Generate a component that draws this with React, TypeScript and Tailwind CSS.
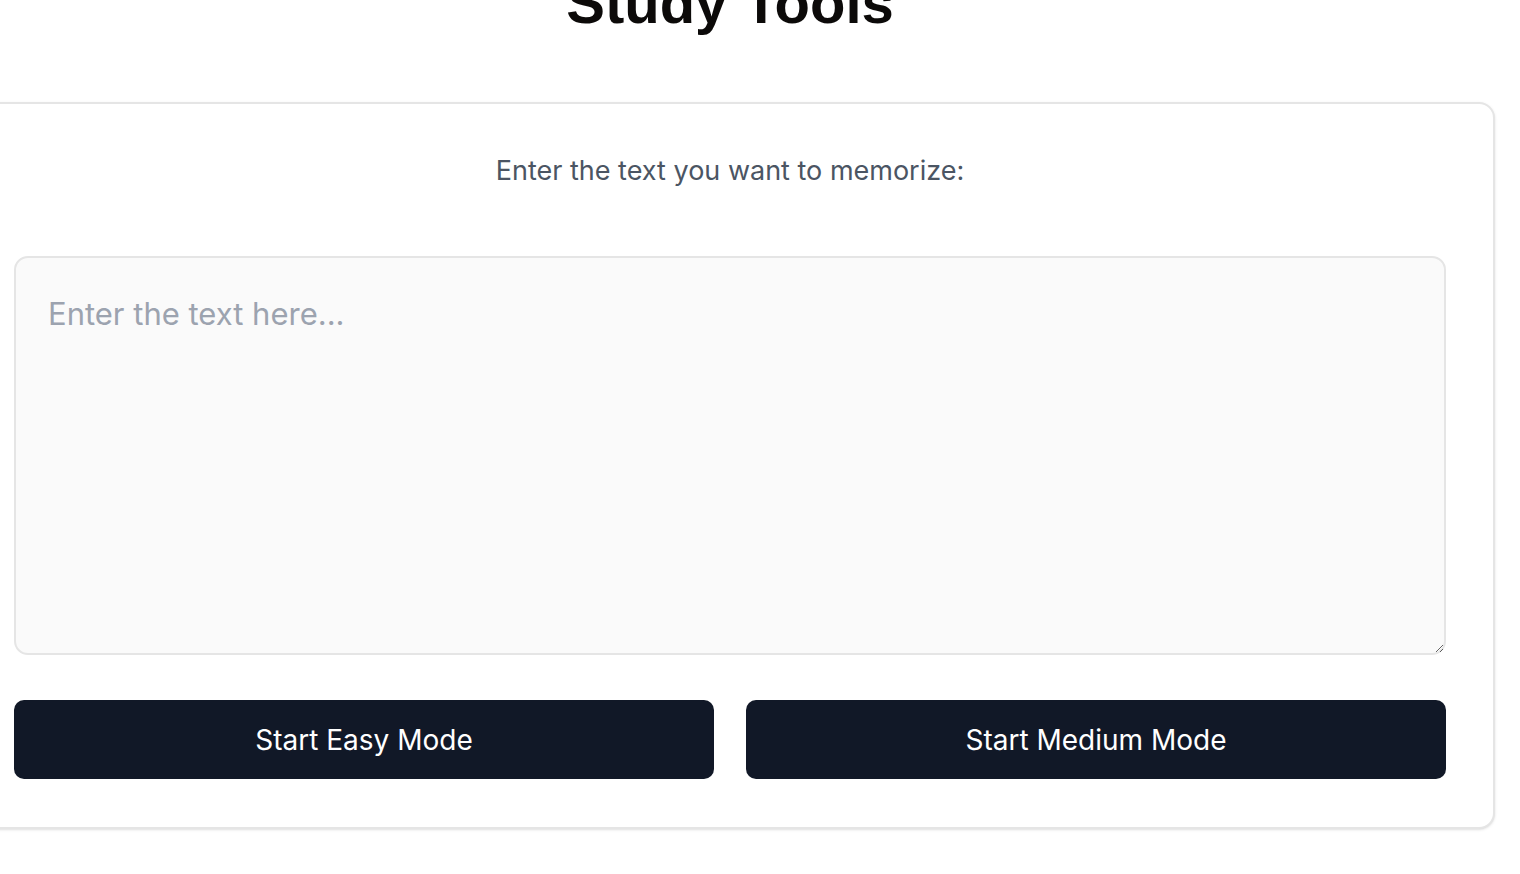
export default function App() {
  return (
    <div className="min-h-screen bg-white overflow-hidden">
      <div className="w-[1530px] -ml-[35px] -mt-[26px]">
        <h1 className="text-center text-[58px] leading-none font-bold text-[#0c0a09] font-['Liberation_Sans',Arial,sans-serif] mb-[70px]">
          Study Tools
        </h1>
        <div className="rounded-2xl border-2 border-[#e5e5e5] bg-white shadow-sm px-[47px] pt-[47px] pb-[48px] font-['Inter',sans-serif]">
          <p className="text-center text-[27px] leading-[40px] text-[#4b5563]">
            Enter the text you want to memorize:
          </p>
          <textarea
            placeholder="Enter the text here..."
            className="mt-[65px] block w-full h-[399px] rounded-[14px] border-2 border-[#e5e5e5] bg-[#fafafa] px-[32px] py-[36px] text-[31px] leading-[40px] text-gray-800 placeholder:text-[#9ca3af] outline-none"
          />
          <div className="mt-[45px] grid grid-cols-2 gap-8">
            <button className="h-[79px] rounded-[10px] bg-[#111827] text-white text-[28px]">
              Start Easy Mode
            </button>
            <button className="h-[79px] rounded-[10px] bg-[#111827] text-white text-[28px]">
              Start Medium Mode
            </button>
          </div>
        </div>
      </div>
    </div>
  );
}
